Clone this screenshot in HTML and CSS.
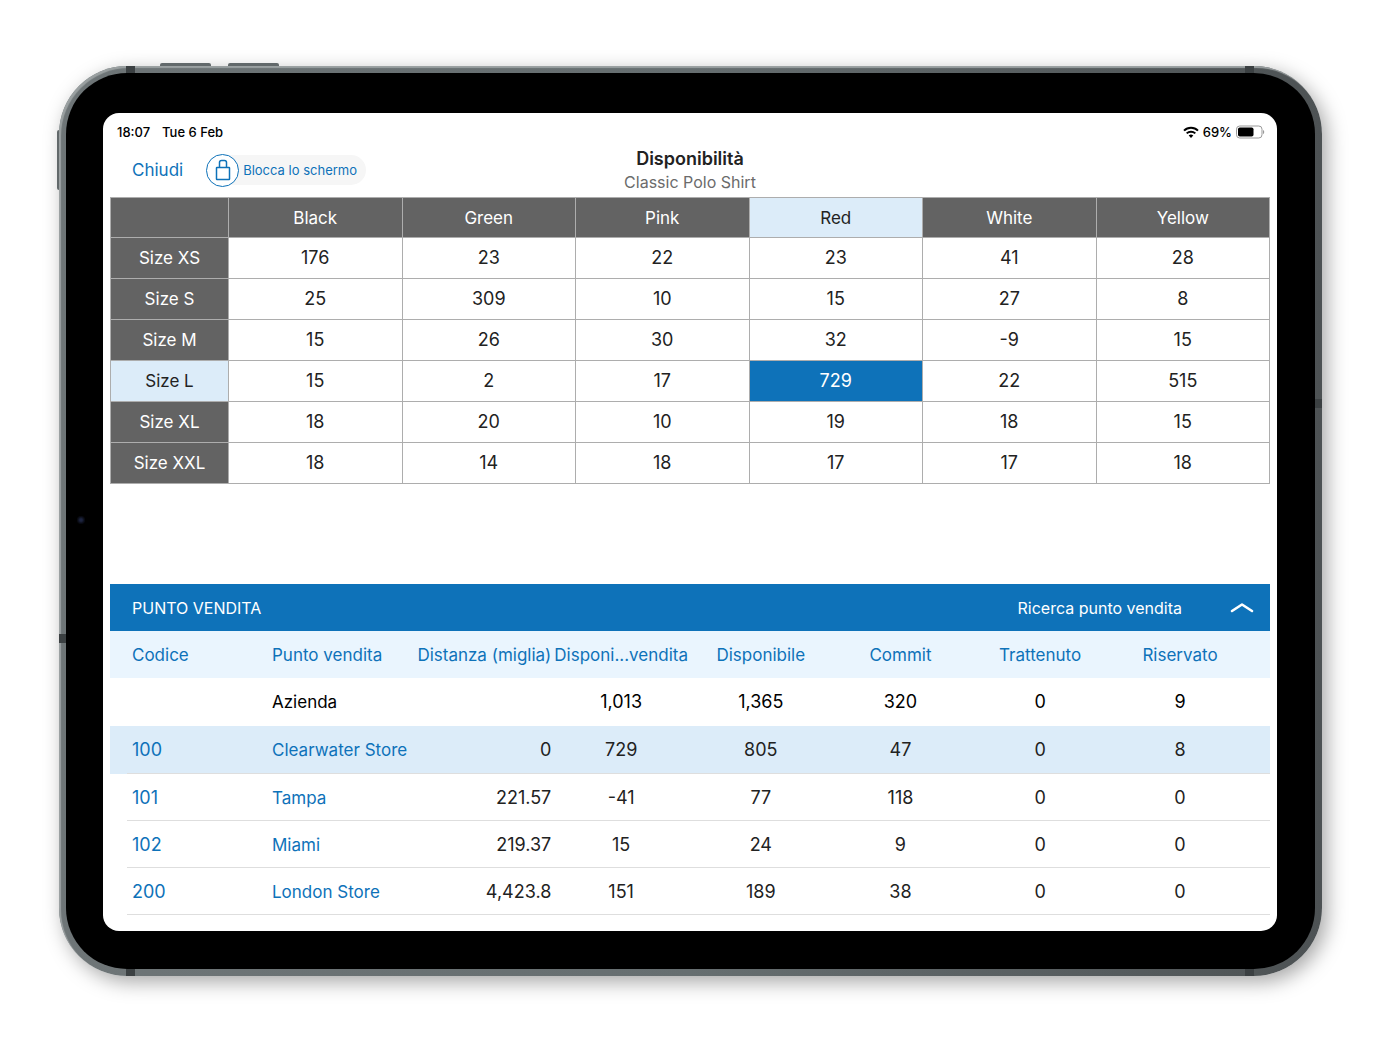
FILE: index.html
```html
<!DOCTYPE html>
<html lang="it">
<head>
<meta charset="utf-8">
<meta name="viewport" content="width=device-width, initial-scale=1">
<title>Disponibilità</title>
<link rel="stylesheet" href="styles.css">
</head>
<body>
<div class="tablet">
  <span class="key key-up"></span>
  <span class="key key-down"></span>
  <span class="key key-power"></span>
  <span class="band band-top band-left"></span>
  <span class="band band-top band-right"></span>
  <span class="band band-bottom band-left"></span>
  <span class="band band-bottom band-right"></span>
  <span class="band band-side-left"></span>
  <span class="band band-side-right"></span>
  <div class="bezel">
    <span class="camera"></span>
    <main class="screen">
      <div class="status">
        <div class="status-time"><span>18:07</span><span>Tue 6 Feb</span></div>
        <div class="status-power">
          <svg width="16" height="12" viewBox="0 0 16 12" aria-hidden="true">
            <g fill="none" stroke="#000" stroke-width="2">
              <path d="M1 4.6a10 10 0 0 1 14 0"/>
              <path d="M3.7 7.4a6.1 6.1 0 0 1 8.6 0"/>
            </g>
            <path d="M8 12 5.7 9.6a3.3 3.3 0 0 1 4.6 0z"/>
          </svg>
          <span>69%</span>
          <svg width="29" height="14" viewBox="0 0 29 14" aria-hidden="true">
            <rect x=".5" y="1" width="25.5" height="12" rx="3.2" fill="none" stroke="#999"/>
            <rect x="2" y="2.5" width="15.5" height="9" rx="1.8"/>
            <path d="M27 5a2.4 2.4 0 0 1 0 4.2z" fill="#999"/>
          </svg>
        </div>
      </div>

      <header class="bar">
        <div class="bar-actions">
          <button class="close" type="button">Chiudi</button>
          <button class="lock" type="button">
            <span class="lock-icon">
              <svg width="16" height="22" viewBox="0 0 16 22" fill="none" stroke="#0e72b9" stroke-width="1.5" stroke-linejoin="round" aria-hidden="true">
                <rect x="1.5" y="8.5" width="13" height="12" rx=".5"/>
                <path d="M4.5 8.500V3.600Q4.500 1.500 6.600 1.500h2.800Q11.500 1.500 11.500 3.600V8.500"/>
              </svg>
            </span>
            <span class="lock-label">Blocca lo schermo</span>
          </button>
        </div>
        <div class="bar-title">
          <h1>Disponibilità</h1>
          <p>Classic Polo Shirt</p>
        </div>
      </header>

      <table class="matrix">
        <thead>
          <tr><td class="size"></td><th scope="col">Black</th><th scope="col">Green</th><th scope="col">Pink</th><th scope="col" class="active">Red</th><th scope="col">White</th><th scope="col">Yellow</th></tr>
        </thead>
        <tbody>
          <tr><th scope="row">Size XS</th><td>176</td><td>23</td><td>22</td><td>23</td><td>41</td><td>28</td></tr>
          <tr><th scope="row">Size S</th><td>25</td><td>309</td><td>10</td><td>15</td><td>27</td><td>8</td></tr>
          <tr><th scope="row">Size M</th><td>15</td><td>26</td><td>30</td><td>32</td><td>-9</td><td>15</td></tr>
          <tr><th scope="row" class="active">Size L</th><td>15</td><td>2</td><td>17</td><td class="picked">729</td><td>22</td><td>515</td></tr>
          <tr><th scope="row">Size XL</th><td>18</td><td>20</td><td>10</td><td>19</td><td>18</td><td>15</td></tr>
          <tr><th scope="row">Size XXL</th><td>18</td><td>14</td><td>18</td><td>17</td><td>17</td><td>18</td></tr>
        </tbody>
      </table>

      <section class="stores">
        <div class="stores-bar">
          <h2>PUNTO VENDITA</h2>
          <button class="search" type="button">Ricerca punto vendita</button>
          <button class="toggle" type="button" aria-label="Comprimi">
            <svg width="24" height="12" viewBox="0 0 24 12" fill="none" stroke="#fff" stroke-width="2.600" stroke-linecap="round" stroke-linejoin="round" aria-hidden="true"><path d="M2 9 12 2.500l10 6.500"/></svg>
          </button>
        </div>
        <table class="list">
          <thead>
            <tr><th scope="col">Codice</th><th scope="col">Punto vendita</th><th scope="col" class="distance">Distanza (miglia)</th><th scope="col">Disponi...vendita</th><th scope="col">Disponibile</th><th scope="col">Commit</th><th scope="col">Trattenuto</th><th scope="col">Riservato</th></tr>
          </thead>
          <tbody>
            <tr class="total"><td></td><td class="name">Azienda</td><td class="distance"></td><td>1,013</td><td>1,365</td><td>320</td><td>0</td><td>9</td></tr>
            <tr class="current"><td><a href="#100">100</a></td><td class="name"><a href="#100">Clearwater Store</a></td><td class="distance">0</td><td>729</td><td>805</td><td>47</td><td>0</td><td>8</td></tr>
            <tr><td><a href="#101">101</a></td><td class="name"><a href="#101">Tampa</a></td><td class="distance">221.57</td><td>-41</td><td>77</td><td>118</td><td>0</td><td>0</td></tr>
            <tr><td><a href="#102">102</a></td><td class="name"><a href="#102">Miami</a></td><td class="distance">219.37</td><td>15</td><td>24</td><td>9</td><td>0</td><td>0</td></tr>
            <tr><td><a href="#200">200</a></td><td class="name"><a href="#200">London Store</a></td><td class="distance">4,423.8</td><td>151</td><td>189</td><td>38</td><td>0</td><td>0</td></tr>
          </tbody>
        </table>
      </section>
    </main>
  </div>
</div>
</body>
</html>
```
FILE: styles.css
```css
:root {
  --blue: #0e72b9;
  --pale: #dcecf9;
  --grey: #636363;
}

* { box-sizing: border-box; }

body {
  margin: 0;
  padding: 66px 70px 62px 59px;
  background: #fff;
  color: #222;
  font: 18px/24px Inter, "Liberation Sans", sans-serif;
}

h1, h2, p { margin: 0; }

button {
  padding: 0;
  border: 0;
  background: none;
  color: inherit;
  font: inherit;
  cursor: pointer;
}

a { color: var(--blue); text-decoration: none; }

/* Tablet casing */
.tablet {
  position: relative;
  padding: 7px;
  border-radius: 68px;
  background: linear-gradient(to right, #6e7577, #666e70 50%, #4d5254);
  box-shadow: inset 2px 2px 1px #9ba1a2, 5px 6px 20px rgba(0, 0, 0, .35);
}

.bezel {
  position: relative;
  padding: 40px 38px 38px 37px;
  border-radius: 61px;
  background: #000;
}

.screen {
  padding: 0 7px 16px;
  border-radius: 16px;
  background: #fff;
  overflow: hidden;
}

.key { position: absolute; background: #62696b; }
.key-up, .key-down { top: -3px; width: 51px; height: 3px; border-radius: 2px 2px 0 0; }
.key-up { left: 101px; }
.key-down { left: 169px; }
.key-power { top: 64px; left: -2px; width: 2px; height: 60px; border-radius: 2px 0 0 2px; }

.band { position: absolute; width: 9px; height: 7px; background: #3b4042; }
.band-top { top: 0; }
.band-bottom { bottom: 0; }
.band-left { left: 67px; }
.band-right { right: 68px; }
.band-side-left, .band-side-right { width: 7px; height: 9px; }
.band-side-left { top: 568px; left: 0; }
.band-side-right { top: 333px; right: 0; }

.camera {
  position: absolute;
  top: 443px;
  left: 11px;
  width: 8px;
  height: 8px;
  border-radius: 50%;
  background: radial-gradient(#1d2440 20%, #080a12 60%);
}

/* Status bar */
.status {
  display: flex;
  justify-content: space-between;
  padding: 7px 5px 3px 7px;
  color: #000;
  font-size: 13px;
  font-weight: 500;
}

.status-time { display: flex; gap: 12px; }
.status-power { display: flex; align-items: center; gap: 4px; }

/* Title bar */
.bar {
  display: grid;
  grid-template-columns: 1fr auto 1fr;
  height: 50px;
  padding: 0 22px;
}

.bar-actions {
  display: flex;
  align-items: center;
  gap: 23px;
  height: 46px;
  color: var(--blue);
  font-size: 17px;
}

.lock { display: flex; align-items: center; font-size: 13px; }

.lock-icon {
  display: grid;
  place-items: center;
  width: 33px;
  height: 33px;
  border: 1px solid var(--blue);
  border-radius: 50%;
  background: #fff;
  z-index: 1;
}

.lock-label {
  margin-left: -17px;
  padding: 3px 9px 3px 21px;
  border-radius: 0 15px 15px 0;
  background: #f6f6f6;
}

.bar-title { text-align: center; }
.bar-title h1 { font-size: 18px; line-height: 24px; font-weight: 600; }
.bar-title p { color: #6b6b6b; font-size: 16px; line-height: 22px; }

/* Size and colour matrix */
table { width: 100%; border-collapse: collapse; table-layout: fixed; }
th, td { padding: 0; font-weight: 400; text-align: center; white-space: nowrap; }
th, .name { font-size: 17px; }

.matrix th, .matrix td { height: 41px; border: 1px solid #adadad; }
.matrix th, .matrix .size { background: var(--grey); color: #fff; }
.matrix .size { width: 118px; }
.matrix thead th, .matrix .size { height: 40px; }
.matrix .active { background: var(--pale); color: #222; }
.matrix .picked { background: var(--blue); color: #fff; }

/* Stores */
.stores { margin-top: 100px; }

.stores-bar {
  display: flex;
  align-items: center;
  height: 47px;
  padding: 0 16px 0 22px;
  background: var(--blue);
  color: #fff;
  font-size: 16px;
}

.stores-bar h2 { flex: 1; font-size: 16px; font-weight: 400; }
.search { margin-right: 48px; }
.toggle { display: flex; }

.list th, .list td { height: 47px; }
.list th { background: #eaf5fe; color: var(--blue); }
.list .total td, .list .current td { height: 48px; }
.list .total td { color: #000; }
.list th:first-child { width: 162px; }
.list th:last-child { width: 160px; }
.list tr > :first-child { padding-left: 22px; text-align: left; }
.list tr > :nth-child(2) { text-align: left; }
.list tr > :last-child { padding-right: 20px; }
.list tr > .distance { text-align: right; }

.list tbody tr {
  background: linear-gradient(#dedede, #dedede) 17px 100% / 100% 1px no-repeat;
}
.list tbody .total { background: none; }
.list tbody .current { background-color: var(--pale); }
```
